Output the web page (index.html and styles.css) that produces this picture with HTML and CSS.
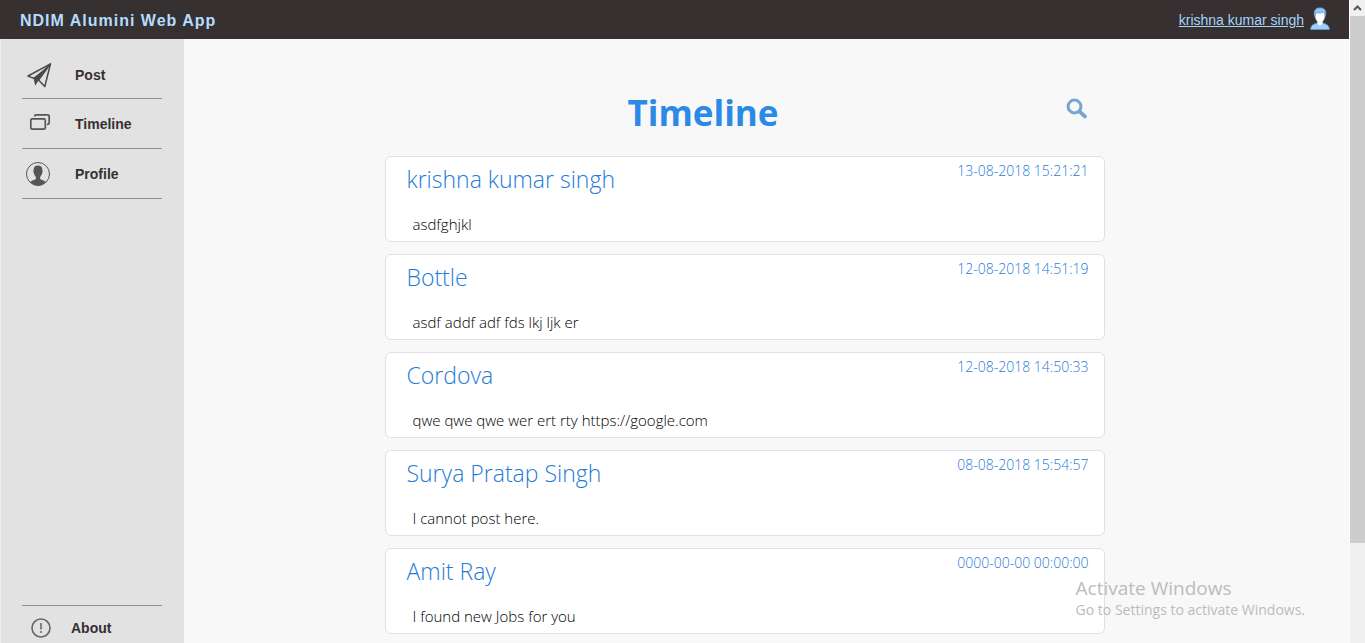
FILE: index.html
```html
<!DOCTYPE html>
<html lang="en">
<head>
<meta charset="utf-8">
<title>NDIM Alumini Web App</title>
<link rel="stylesheet" href="styles.css">
</head>
<body>
<div class="viewport">
  <div class="app">
    <header class="topbar">
      <div class="brand">NDIM Alumini Web App</div>
      <a class="user" href="#"><span class="user-name">krishna kumar singh</span>
        <svg class="user-icon" width="20" height="24" viewBox="0 0 20 24" aria-hidden="true">
          <path d="M.7 22.500C.8 18 3.500 17.300 7.500 16v-2h5v2c4 1.300 6.700 2 6.800 6.500z" fill="#a5cdf5" stroke="#5b9bd5"/>
          <path d="M7.500 13h5v3.200L10 19l-2.500-2.800z" fill="#fff"/>
          <ellipse cx="10" cy="9" rx="4.800" ry="6.200" fill="#fff" stroke="#b7d7f5" stroke-width=".6"/>
          <path d="M4.700 9.500C3 4 5.500.8 10 .8c5 0 6.800 3.500 5.400 8.500-.4-2.300-1-3.300-1.800-4C10.500 6.500 7.500 6 6 5.800 5.200 7 5 8 4.700 9.500z" fill="#93c3f2" stroke="#5b9bd5" stroke-width=".7"/>
        </svg>
      </a>
    </header>
    <div class="body">
      <nav class="sidebar">
        <ul class="nav-list">
          <li><a class="nav-item" href="#">
            <svg class="nav-icon" width="26" height="26" viewBox="0 0 26 26" aria-hidden="true"><g fill="none" stroke="#4a4a4a" stroke-width="1.500" stroke-linejoin="round"><path d="M2 14L24.500 1.800 18.800 24.500 12.500 18z"/><path d="M24.500 1.800L12.500 18"/></g><path d="M24.500 1.800L7.500 15.800l1.700 8 3.300-5.300z" fill="#4a4a4a"/><path d="M19 6.500L4.500 14.200l3 1z" fill="#e2e2e2"/></svg>
            <span>Post</span></a></li>
          <li><a class="nav-item" href="#">
            <svg class="nav-icon" width="26" height="26" viewBox="0 0 26 26" aria-hidden="true"><g fill="none" stroke="#555" stroke-width="1.700"><rect x="4.800" y="7.800" width="14.500" height="10.400" rx="1.500"/><path d="M8.800 5.500V5Q8.800 3.800 10 3.800h11.700q1.500 0 1.500 1.500v6.500q0 1.500-1.500 1.500H21"/></g></svg>
            <span>Timeline</span></a></li>
          <li><a class="nav-item" href="#">
            <svg class="nav-icon" width="26" height="26" viewBox="0 0 26 26" aria-hidden="true"><circle cx="12" cy="13" r="11.500" fill="none" stroke="#555"/><path d="M4.200 21c1.500-1.500 4.500-1.900 5.500-3 .5-.8.200-2-.5-3-.8-.7-1.200-2-1.400-3.200C7 10.500 7.500 9.500 7.700 9 7.400 6 9 4.500 12 4.500S16.600 6 16.300 9c.2.500.7 1.500-.1 2.800-.2 1.200-.6 2.500-1.400 3.200-.7 1-1 2.200-.5 3 1 1.100 4 1.500 5.500 3-4 4.700-11.600 4.700-15.600 0z" fill="#555"/></svg>
            <span>Profile</span></a></li>
        </ul>
        <a class="nav-about" href="#">
          <svg class="about-icon" width="20" height="20" viewBox="0 0 20 20" aria-hidden="true"><circle cx="10" cy="10" r="9" fill="none" stroke="#666" stroke-width="1.600"/><path d="M10 5v6.500M10 13v2" stroke="#777" stroke-width="1.800"/></svg>
          <span>About</span></a>
      </nav>
      <main class="content">
        <div class="feed">
          <div class="feed-head">
            <h1 class="title">Timeline</h1>
            <button class="search" type="button" aria-label="Search">
              <svg class="search-icon" width="22" height="22" viewBox="0 0 22 22" aria-hidden="true"><circle cx="8.500" cy="8.500" r="6.400" fill="none" stroke="#76a5cf" stroke-width="3"/><path d="M13.500 13.500L19 18.500" stroke="#76a5cf" stroke-width="3.800" stroke-linecap="round"/></svg>
            </button>
          </div>
          <article class="card"><div class="card-head"><h2 class="author">krishna kumar singh</h2><time class="date">13-08-2018 15:21:21</time></div><p class="text">asdfghjkl</p></article>
          <article class="card"><div class="card-head"><h2 class="author">Bottle</h2><time class="date">12-08-2018 14:51:19</time></div><p class="text">asdf addf adf fds lkj ljk er</p></article>
          <article class="card"><div class="card-head"><h2 class="author">Cordova</h2><time class="date">12-08-2018 14:50:33</time></div><p class="text">qwe qwe qwe wer ert rty https://google.com</p></article>
          <article class="card"><div class="card-head"><h2 class="author">Surya Pratap Singh</h2><time class="date">08-08-2018 15:54:57</time></div><p class="text">I cannot post here.</p></article>
          <article class="card"><div class="card-head"><h2 class="author">Amit Ray</h2><time class="date">0000-00-00 00:00:00</time></div><p class="text">I found new Jobs for you</p></article>
        </div>
      </main>
    </div>
  </div>
  <div class="scrollbar" aria-hidden="true">
    <svg class="scroll-arrow" width="15" height="16" viewBox="0 0 15 16"><path d="M4 10l3.500-3.500L11 10" fill="none" stroke="#555" stroke-width="2"/></svg>
    <div class="scroll-thumb"></div>
  </div>
  <aside class="watermark"><div class="watermark-title">Activate Windows</div><div class="watermark-text">Go to Settings to activate Windows.</div></aside>
</div>
</body>
</html>
```
FILE: styles.css
```css
* { box-sizing: border-box; }

body {
  margin: 0;
  background: #f8f8f8;
  font-family: "Liberation Sans", Arial, sans-serif;
  overflow: hidden;
}

.viewport {
  position: relative;
  display: flex;
  height: 100vh;
}

.app {
  flex: 1;
  display: flex;
  flex-direction: column;
  min-width: 0;
}

.topbar {
  display: flex;
  flex: none;
  align-items: center;
  justify-content: space-between;
  padding: 7px 19px 8px 20px;
  background: #363030;
}

.brand {
  padding-top: 3px;
  color: #b3dcff;
  font-size: 16px;
  font-weight: bold;
  letter-spacing: 1px;
}

.user {
  display: flex;
  align-items: center;
  gap: 6px;
  color: #a5d3fb;
  font-size: 14px;
}

.user-name { padding-top: 2px; }

.user-icon { display: block; }

.body {
  flex: 1;
  display: flex;
  min-height: 0;
}

.sidebar {
  flex: none;
  display: flex;
  flex-direction: column;
  justify-content: space-between;
  width: 184px;
  padding: 13px 22px 0 21px;
  border-left: 1px solid #f0f0f0;
  background: #e2e2e2;
}

.nav-list {
  margin: 0;
  padding: 0;
  list-style: none;
}

.nav-item,
.nav-about {
  display: flex;
  align-items: center;
  color: #363030;
  font-size: 14px;
  font-weight: bold;
  text-decoration: none;
}

.nav-item {
  gap: 23px;
  height: 50px;
  padding-left: 4px;
  border-bottom: 1px solid #8f8f8f;
}

.nav-list li:first-child .nav-item { height: 47px; }

.nav-about {
  gap: 20px;
  padding: 12px 0 5px 9px;
  border-top: 1px solid #8f8f8f;
}

.content {
  flex: 1;
  padding: 46px 44px 0 0;
  overflow: hidden;
}

.feed {
  display: flex;
  flex-direction: column;
  gap: 12px;
  max-width: 720px;
  margin: 0 auto;
}

.feed-head {
  display: grid;
  grid-template-columns: 1fr auto;
  align-items: center;
  padding: 0 17px 3px 0;
}

.title {
  margin: 0;
  padding-right: 44px;
  color: #2a8ae6;
  font: bold 35px/56px "Open Sans", sans-serif;
  text-align: center;
}

.search {
  padding: 0 0 8px;
  border: 0;
  background: none;
}

.search-icon { display: block; }

.card {
  padding: 0 15px 3px 21px;
  border: 1px solid #dfe1e7;
  border-radius: 6px;
  background: #fff;
  font-family: "Open Sans", sans-serif;
  font-weight: 300;
}

.card-head {
  display: flex;
  align-items: flex-start;
  justify-content: space-between;
  color: #1f7bd8;
}

.author {
  margin: 0;
  font-size: 23px;
  font-weight: 300;
  line-height: 44px;
}

.date {
  font-size: 14px;
  line-height: 28px;
}

.text {
  margin: 9px 0 0 6px;
  color: #000;
  font-size: 15px;
  line-height: 28px;
}

.scrollbar {
  flex: none;
  width: 16px;
  border-left: 1px solid #fff;
  background: #f0f0f0;
}

.scroll-arrow { display: block; }

.scroll-thumb {
  height: 82%;
  background: #cdcdcd;
}

.watermark {
  position: absolute;
  right: 60px;
  bottom: 23px;
  color: #bcbcbc;
  font-family: "Open Sans", sans-serif;
}

.watermark-title {
  font-size: 19px;
  line-height: 24px;
}

.watermark-text {
  font-size: 14px;
  line-height: 20px;
}
```
